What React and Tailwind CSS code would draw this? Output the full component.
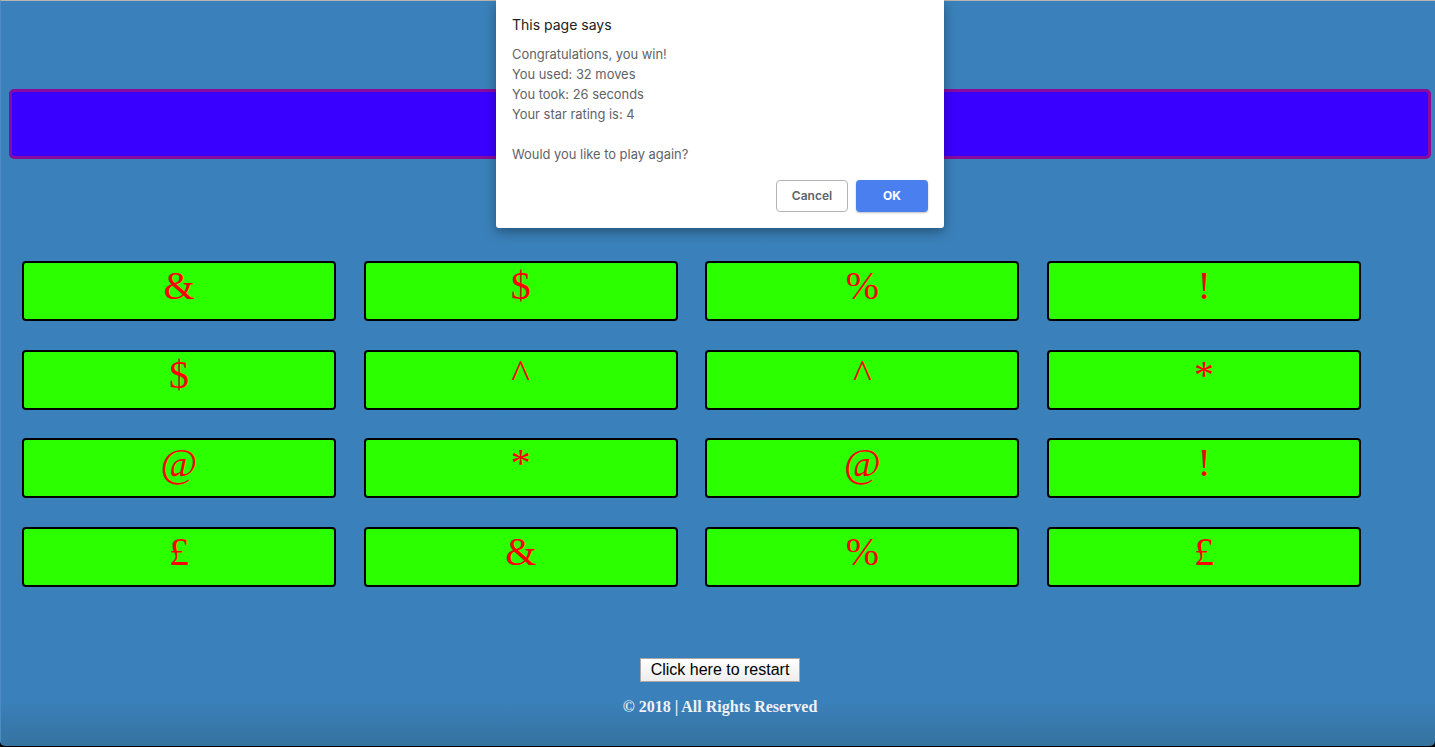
import React from 'react'

const cards = [
  '&', '$', '%', '!',
  '$', '^', '^', '*',
  '@', '*', '@', '!',
  '£', '&', '%', '£',
]

const lines = [
  'Congratulations, you win!',
  'You used: 32 moves',
  'You took: 26 seconds',
  'Your star rating is: 4',
]

function AlertDialog() {
  return (
    <div className="absolute left-[496px] top-0 w-[448px] h-[228px] bg-white rounded-b-[3px] shadow-[0_4px_12px_rgba(0,0,0,0.35)] px-4 pt-[14px] font-['Inter','Noto_Sans',sans-serif]">
      <p className="text-[14px] leading-[22px] text-[#202124]">This page says</p>
      <div className="mt-[9px] text-[12.9px] leading-[20px] text-[#5f6368]">
        {lines.map(l => <p key={l}>{l}</p>)}
        <p className="mt-[20px]">Would you like to play again?</p>
      </div>
      <div className="flex justify-end gap-2 mt-[15px]">
        <button className="w-[72px] h-[32px] rounded-[4px] border border-[#b5b5b5] bg-white text-[12px] font-semibold text-[#5f6368]">Cancel</button>
        <button className="w-[72px] h-[32px] rounded-[4px] bg-[#4a7ff0] text-[12px] font-bold text-white shadow-[0_1px_2px_rgba(0,0,0,0.25)]">OK</button>
      </div>
    </div>
  )
}

export default function App() {
  return (
    <div className="relative w-[1435px] h-[747px] overflow-hidden bg-black">
      <div className="h-[746px] border-t border-[#b9b4ae] border-l border-l-[#4a8cc3] rounded-b-[5px] bg-gradient-to-b from-[#3a80ba] from-[94%] to-[#35739f]">
        {/* Header bar */}
        <div className="ml-[8px] mr-[4px] mt-[88px] h-[70px] rounded-[5px] border-[3px] border-[#8a0a9c] bg-[#3a00ff]" />

        {/* Deck */}
        <div className="mt-[102px] ml-[21px] grid grid-cols-[repeat(4,314px)] gap-x-[27.7px] gap-y-[28.5px]">
          {cards.map((c, i) => (
            <div
              key={i}
              className="h-[60px] rounded-[4px] border-2 border-black bg-[#2bff00] text-center text-[40px] leading-[44px] pt-[1px] text-[#ff0000] font-['Liberation_Serif',serif]"
            >
              {c}
            </div>
          ))}
        </div>

        {/* Restart + footer */}
        <div className="ml-[8px] mr-[4px] mt-[71px] flex flex-col items-center">
          <button className="w-[160px] h-[24px] border border-[#a8a8a8] bg-gradient-to-b from-white to-[#ededed] text-[16px] leading-[22px] text-black font-['Liberation_Sans',Arial,sans-serif]">
            Click here to restart
          </button>
          <p className="mt-[13px] text-[16px] font-bold text-[#eef2f7] font-['Liberation_Serif',serif]">© 2018 | All Rights Reserved</p>
        </div>
      </div>
      <AlertDialog />
    </div>
  )
}
